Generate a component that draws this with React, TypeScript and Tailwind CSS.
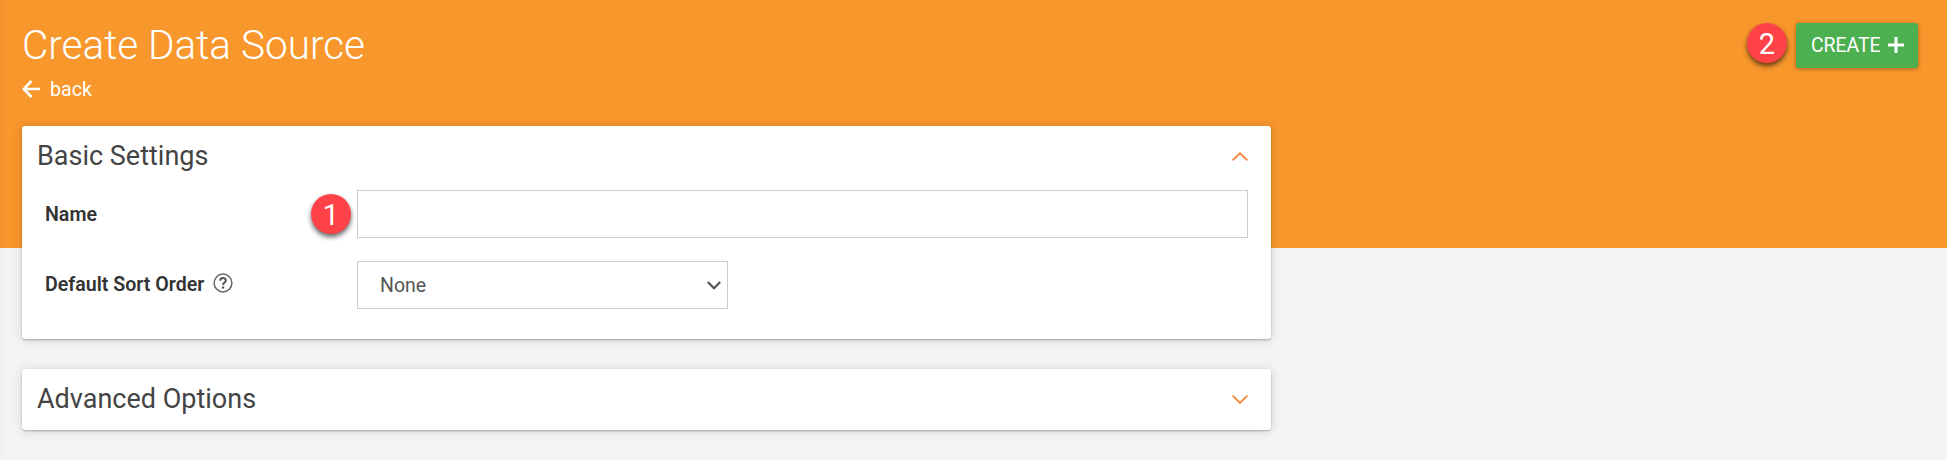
import type { ReactNode } from "react";

function Chevron({ up = false }: { up?: boolean }) {
  return (
    <svg width="16" height="9" viewBox="0 0 16 9" fill="none" stroke="#f97f32" strokeWidth="1.8" className={up ? "mb-[3px]" : ""}>
      <path d={up ? "M0.6 8.3 L8 1.2 L15.4 8.3" : "M0.6 0.7 L8 7.8 L15.4 0.7"} />
    </svg>
  );
}

function Badge({ children }: { children: ReactNode }) {
  return (
    <span className="flex size-10 shrink-0 items-center justify-center rounded-full bg-[#fe4247] pt-[2px] font-[Roboto,sans-serif] text-[29px] leading-none text-white shadow-[0_3px_5px_rgba(0,0,0,0.6)]">
      {children}
    </span>
  );
}

const card =
  "w-[1249px] rounded-[3px] bg-white shadow-[0_1px_2px_rgba(0,0,0,0.26),0_1px_12px_rgba(0,0,0,0.14)]";

export default function App() {
  return (
    <div className="h-[460px] w-full overflow-hidden bg-[linear-gradient(to_right,rgba(0,0,0,0.02),transparent_8px),linear-gradient(to_bottom,#f8972c_248px,#f4f4f4_248px)] pl-[22px] font-[Roboto,sans-serif] text-[#333]">
      <header className="flex h-[126px] items-start justify-between pr-[29px]">
        <div className="text-white">
          <h1 className="mt-[18px] text-[40.5px] leading-[54px] font-light whitespace-nowrap">Create Data Source</h1>
          <a className="mt-1 flex h-[26px] items-center text-[19.6px] leading-[26px]">
            <svg width="18" height="18" viewBox="0 0 18 18" fill="none" stroke="currentColor" strokeWidth="2.6" className="mr-[10px] mb-px">
              <path d="M9.5 1 L1.8 9 L9.5 17 M1.8 9 H18" />
            </svg>
            <span className="pt-[2px]">back</span>
          </a>
        </div>
        <div className="mt-[23px] flex items-start gap-[9px]">
          <Badge>2</Badge>
          <button className="flex h-[45px] w-[122px] items-center justify-between rounded-[3px] bg-[#4caf50] pr-[14px] pl-[15px] text-[19.4px] text-white shadow-[0_1px_4px_rgba(0,0,0,0.35)]">
            CREATE
            <svg width="16" height="16" viewBox="0 0 16 16" fill="none" stroke="currentColor" strokeWidth="3" className="mb-[2px]">
              <path d="M8 0 V16 M0 8 H16" />
            </svg>
          </button>
        </div>
      </header>
      <main className="flex flex-col gap-[30px]">
        <section className={`${card} h-[213px] pr-[23px]`}>
          <div className="flex h-16 items-center justify-between pl-[15px]">
            <h2 className="pb-1 text-[27px] leading-8 text-[#444]">Basic Settings</h2>
            <Chevron up />
          </div>
          <div className="flex h-12 items-center pl-[23px]">
            <label className="w-[266px] pt-[2px] text-[19.6px] font-semibold">Name</label>
            <Badge>1</Badge>
            <input className="ml-[6px] h-12 flex-1 border border-[#ccc] bg-white outline-none" />
          </div>
          <div className="mt-[23px] flex h-12 items-center pl-[23px]">
            <label className="flex w-[312px] items-center text-[19.6px] font-semibold">
              <span>Default Sort Order</span>
              <svg width="20" height="20" viewBox="0 0 20 20" fill="none" className="mb-[3px] ml-[9px]">
                <circle cx="10" cy="10" r="8.9" stroke="#666" strokeWidth="1.5" />
                <path d="M7.2 7.8 C7.2 4.2 12.8 4.2 12.8 7.5 C12.8 9.5 10 9.6 10 12" stroke="#555" strokeWidth="2" />
                <circle cx="10" cy="14.6" r="1.25" fill="#555" />
              </svg>
            </label>
            <div className="flex h-12 w-[371px] items-center justify-between border border-[#ccc] pr-[6px] pl-[22px] text-[19.5px] text-[#555]">
              <span className="pt-[2px]">None</span>
              <svg width="14" height="9" viewBox="0 0 14 9" fill="none" stroke="#555" strokeWidth="2.3">
                <path d="M0.8 1 L7 7.2 L13.2 1" />
              </svg>
            </div>
          </div>
        </section>
        <section className={`${card} flex h-[61px] items-center justify-between pr-[23px] pl-[15px]`}>
          <h2 className="pb-[2px] text-[27px] leading-8 text-[#444]">Advanced Options</h2>
          <Chevron />
        </section>
      </main>
    </div>
  );
}
